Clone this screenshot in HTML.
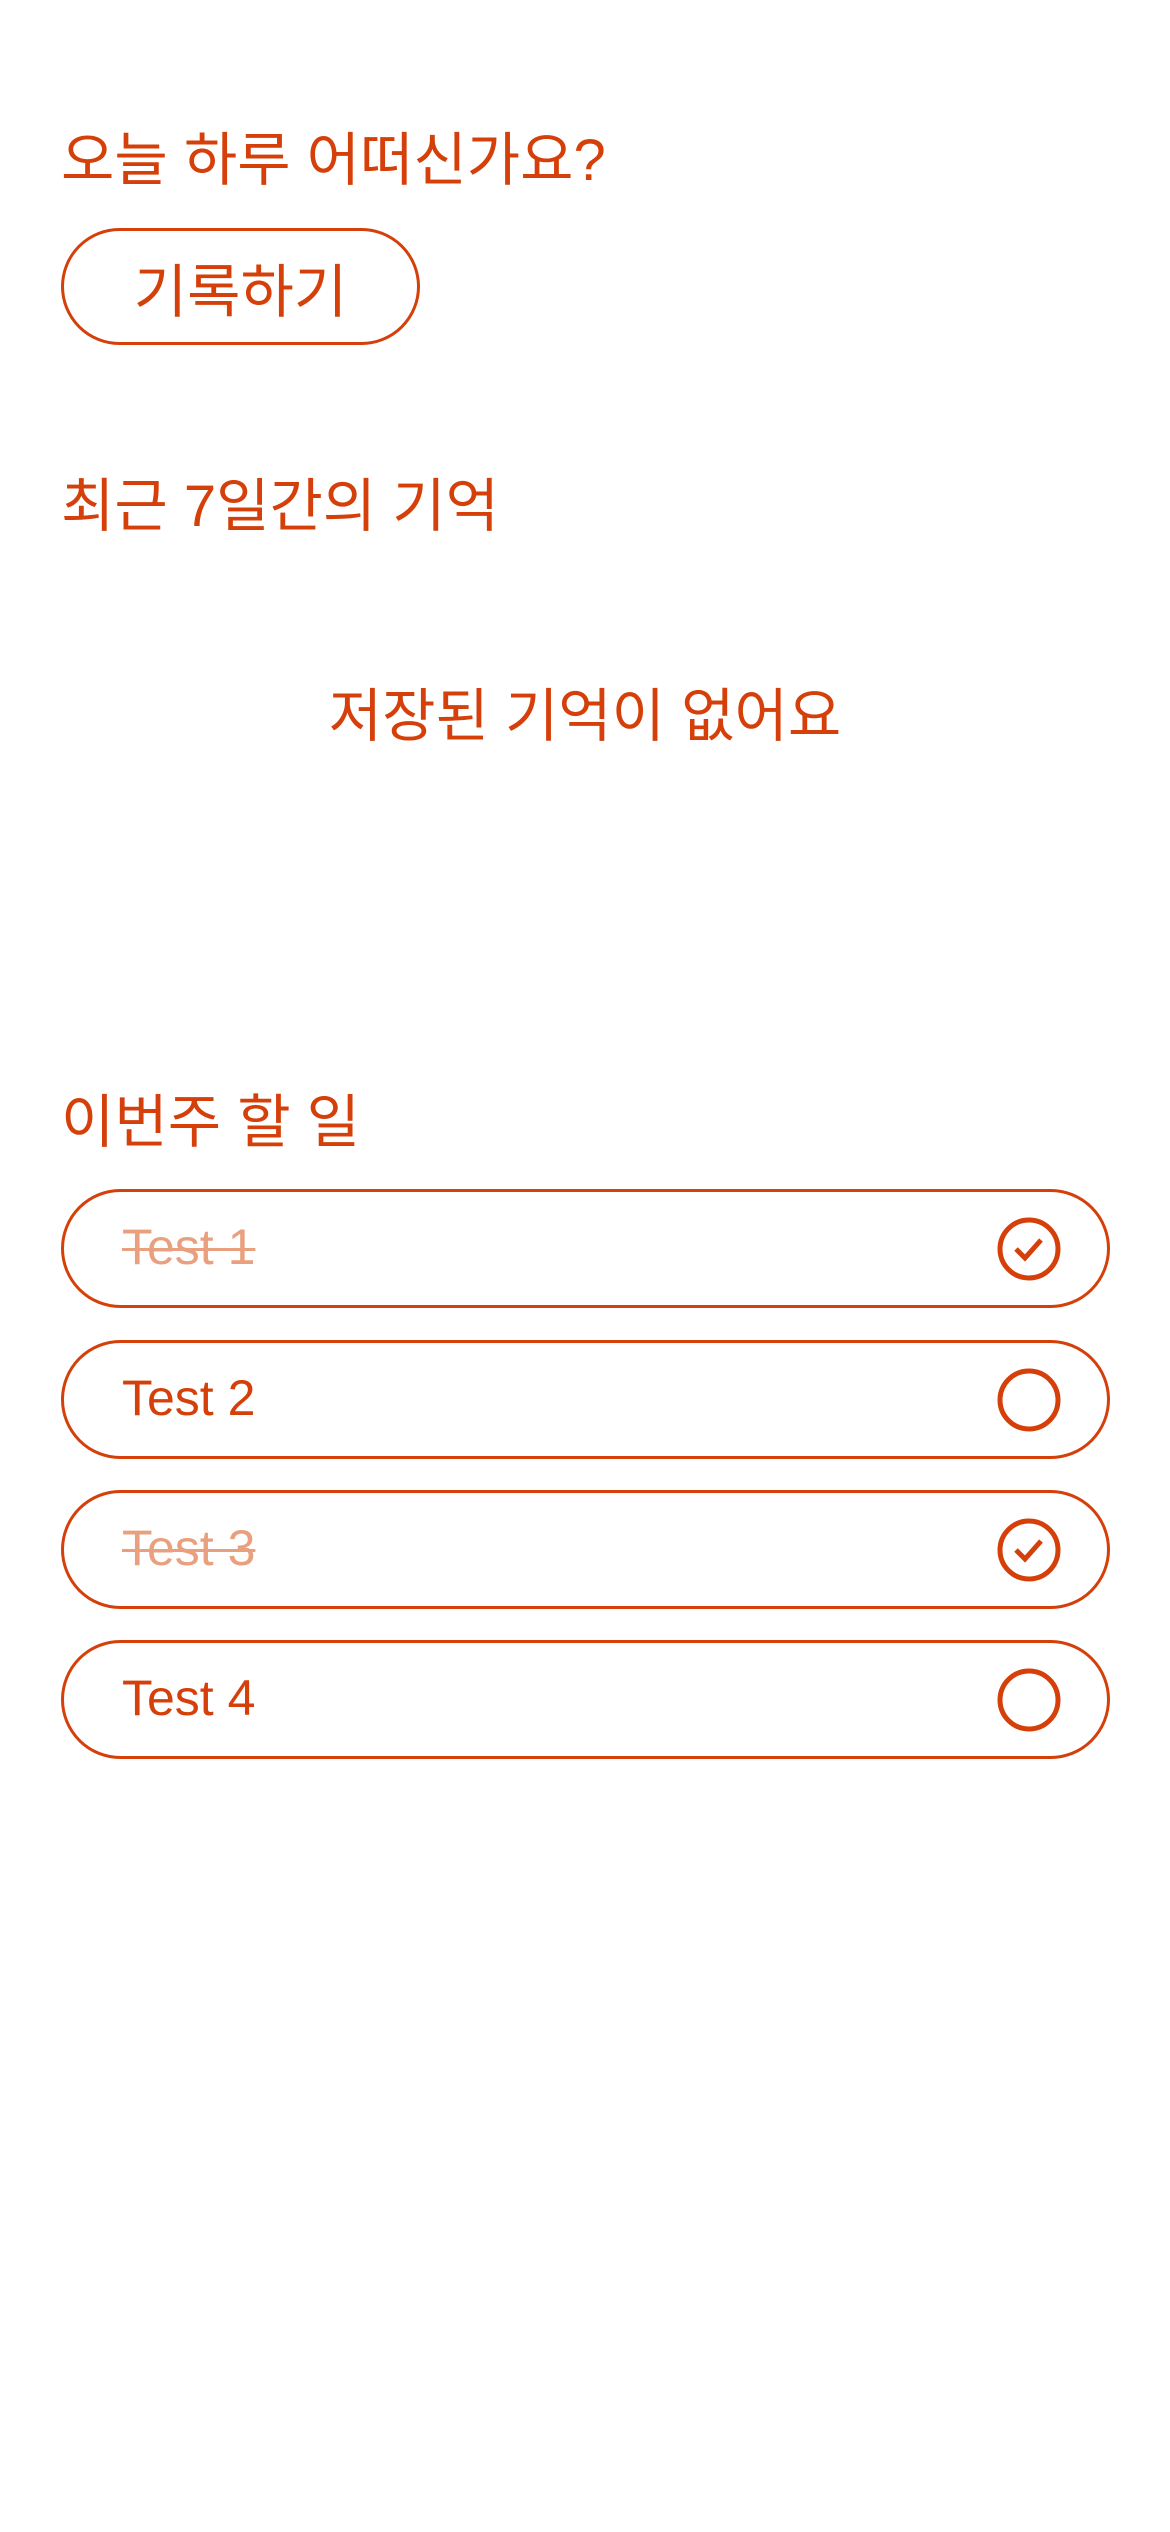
<!DOCTYPE html>
<html><head><meta charset="utf-8"><style>
html,body{margin:0;padding:0;background:#fff;}
body{width:1170px;height:2532px;position:relative;overflow:hidden;font-family:"Liberation Sans","Noto Sans CJK KR",sans-serif;color:#D5400A;}
.t{position:absolute;left:61px;font-size:58px;line-height:1;white-space:nowrap;}
.btn{position:absolute;left:61px;top:228px;width:353px;height:111px;border:3px solid #D5400A;border-radius:60px;font-size:58px;display:flex;align-items:center;justify-content:center;}
.empty{position:absolute;left:0;width:1170px;text-align:center;top:688px;font-size:58px;line-height:1;}
.todo{position:absolute;left:61px;width:1043px;height:113px;border:3px solid #D5400A;border-radius:60px;}
.todo span{position:absolute;left:58px;top:30px;font-size:50px;line-height:1;}
.todo span.done{color:#E9A07F;text-decoration:line-through;text-decoration-thickness:3px;}
.todo svg{position:absolute;left:932px;top:24px;}
</style></head><body>
<div class="t" style="top:132px">오늘 하루 어떠신가요?</div>
<div class="btn">기록하기</div>
<div class="t" style="top:478px">최근 7일간의 기억</div>
<div class="empty">저장된 기억이 없어요</div>
<div class="t" style="top:1094px">이번주 할 일</div>

<div class="todo" style="top:1189px"><span class="done">Test 1</span>
<svg width="66" height="66" viewBox="0 0 66 66"><circle cx="33" cy="33" r="29" fill="none" stroke="#D5400A" stroke-width="5"/><path d="M20 33 L29 42 L45 24" fill="none" stroke="#D5400A" stroke-width="5"/></svg></div>
<div class="todo" style="top:1340px"><span>Test 2</span>
<svg width="66" height="66" viewBox="0 0 66 66"><circle cx="33" cy="33" r="29" fill="none" stroke="#D5400A" stroke-width="5"/></svg></div>
<div class="todo" style="top:1490px"><span class="done">Test 3</span>
<svg width="66" height="66" viewBox="0 0 66 66"><circle cx="33" cy="33" r="29" fill="none" stroke="#D5400A" stroke-width="5"/><path d="M20 33 L29 42 L45 24" fill="none" stroke="#D5400A" stroke-width="5"/></svg></div>
<div class="todo" style="top:1640px"><span>Test 4</span>
<svg width="66" height="66" viewBox="0 0 66 66"><circle cx="33" cy="33" r="29" fill="none" stroke="#D5400A" stroke-width="5"/></svg></div>
</body></html>
